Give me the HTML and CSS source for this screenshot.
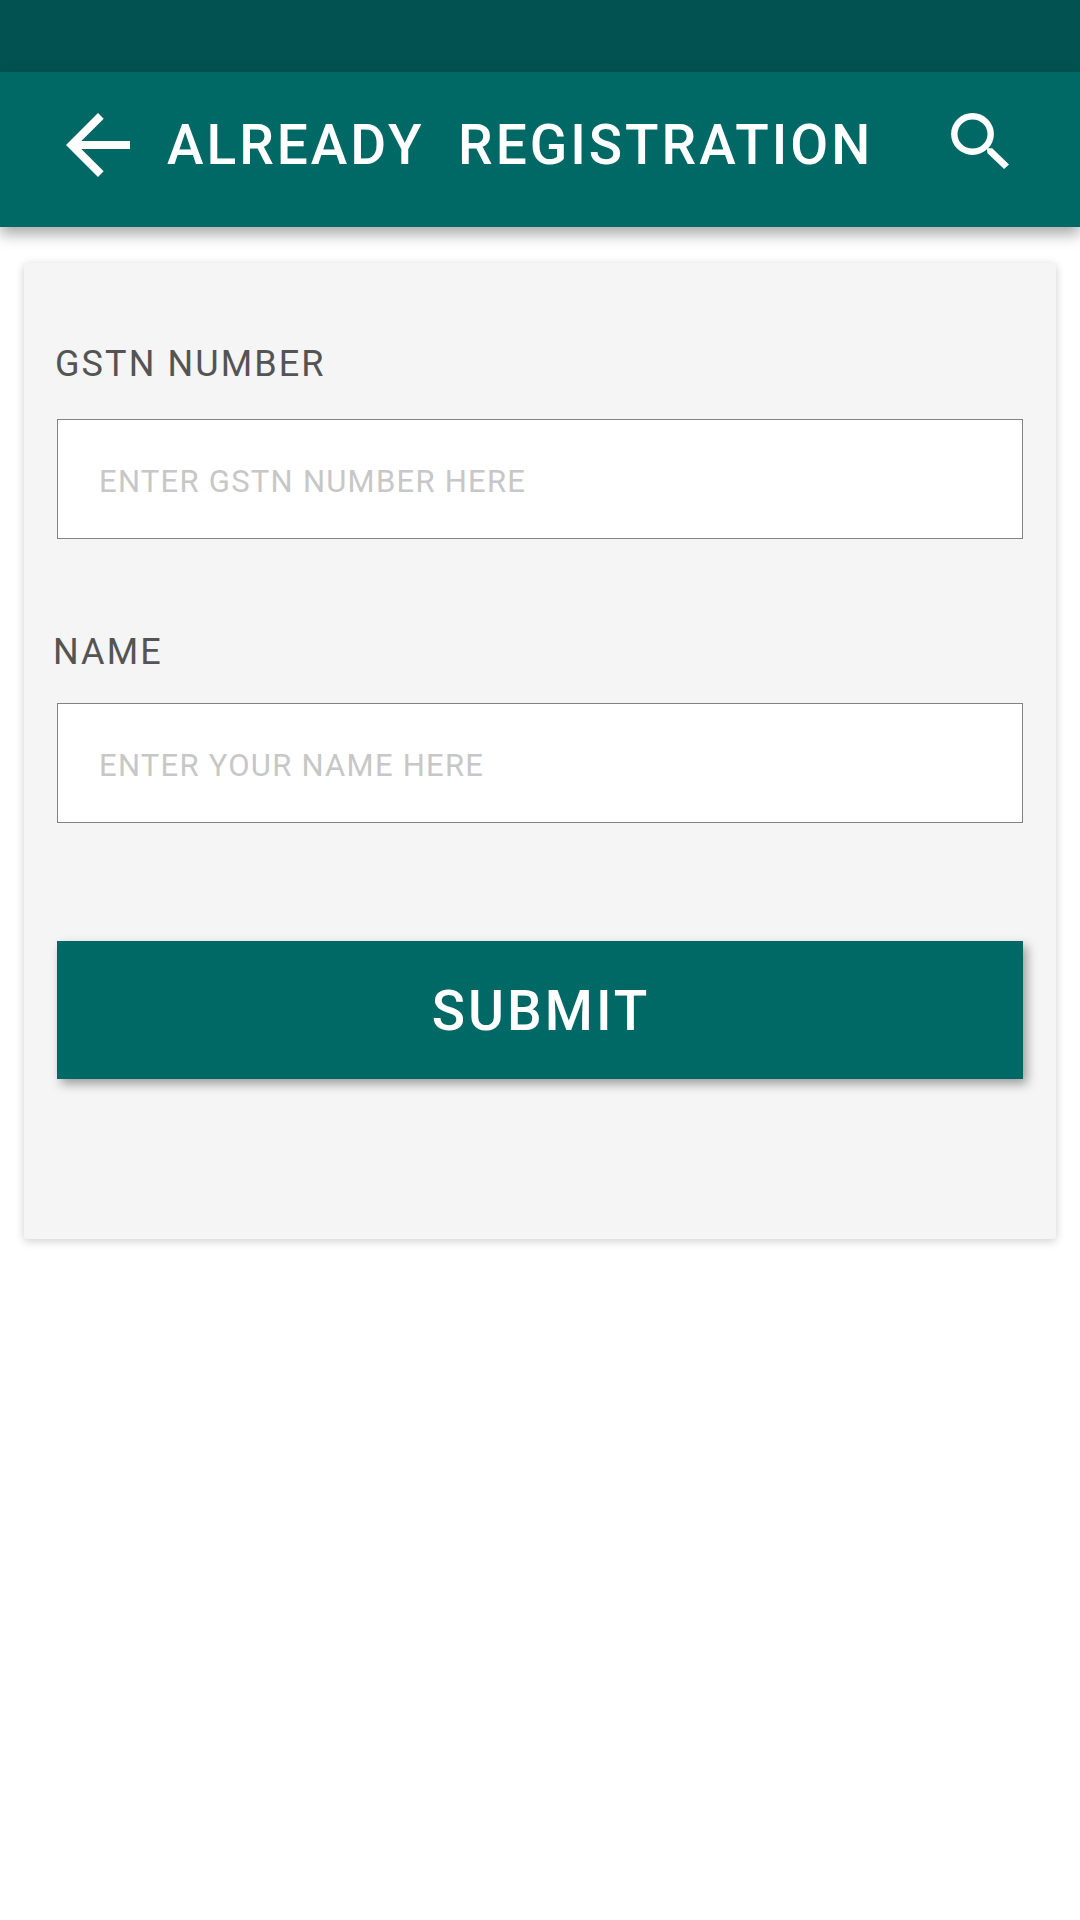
FILE: index.html
```html
<!DOCTYPE html>
<html lang="en">
<head>
<meta charset="utf-8">
<title>Already Registration</title>
<link rel="stylesheet" href="styles.css">
</head>
<body>
<div class="status-bar"></div>
<header class="app-bar">
  <svg class="icon-back" viewBox="0 0 24 24"><path d="M20 11H7.83l5.59-5.59L12 4l-8 8 8 8 1.41-1.41L7.83 13H20v-2z"/></svg>
  <h1 class="title">ALREADY&nbsp; REGISTRATION</h1>
  <svg class="icon-search" viewBox="0 0 58 58"><ellipse cx="21.5" cy="22" rx="18.2" ry="17.8"/><path d="M36 36.3h5.2L58 52.4 53.1 57 36.3 41z"/></svg>
</header>
<main class="card">
  <form class="form">
    <label class="label" for="gstn">GSTN NUMBER</label>
    <input class="field" id="gstn" type="text" placeholder="ENTER GSTN NUMBER HERE">
    <label class="label label-name" for="name">NAME</label>
    <input class="field" id="name" type="text" placeholder="ENTER YOUR NAME HERE">
    <button class="submit" type="button">SUBMIT</button>
  </form>
</main>
</body>
</html>
```
FILE: styles.css
```css
* { box-sizing: border-box; }

body {
  margin: 0;
  min-height: 1920px;
  background: #fff;
  font-family: Roboto, sans-serif;
}

.status-bar {
  height: 72px;
  background: #035252;
}

.app-bar {
  position: relative;
  display: flex;
  align-items: flex-start;
  height: 155px;
  padding: 25px 71px 0 50px;
  background: #006966;
  box-shadow: 0 7px 14px rgba(0, 0, 0, 0.35);
}

.icon-back {
  width: 96px;
  height: 96px;
  fill: #fff;
}

.title {
  flex: 1;
  margin: 16px 0 0 21px;
  color: #fff;
  font-size: 55px;
  font-weight: 500;
  line-height: 64px;
  letter-spacing: 3px;
  white-space: nowrap;
}

.icon-search {
  width: 58px;
  height: 58px;
  margin-top: 15px;
  fill: #fff;
}

.icon-search ellipse {
  fill: none;
  stroke: #fff;
  stroke-width: 6.4;
}

.card {
  height: 976px;
  margin: 36px 24px 0;
  padding: 80px 33px 0;
  border-radius: 3px;
  background: #f5f5f5;
  box-shadow: 0 2px 10px rgba(0, 0, 0, 0.2);
}

.form {
  display: flex;
  flex-direction: column;
}

.label {
  height: 42px;
  margin: 0 0 34px -2px;
  color: #545454;
  font-size: 36px;
  line-height: 42px;
  letter-spacing: 2.1px;
}

.label-name {
  margin: 92px 0 30px -4px;
}

.field {
  height: 120px;
  padding: 4px 41px 0;
  border: 1px solid #838383;
  border-radius: 0;
  outline: none;
  background: #fff;
  color: #545454;
  font: 31px Roboto, sans-serif;
  letter-spacing: 1.26px;
}

.field::placeholder {
  color: #c7c7c7;
  opacity: 1;
}

.submit {
  height: 138px;
  margin-top: 118px;
  padding: 2px 0 0 2px;
  border: 0;
  background: #006966;
  box-shadow: 4px 5px 10px rgba(0, 0, 0, 0.36);
  color: #fff;
  font: 500 55px Roboto, sans-serif;
  letter-spacing: 3px;
}
```
